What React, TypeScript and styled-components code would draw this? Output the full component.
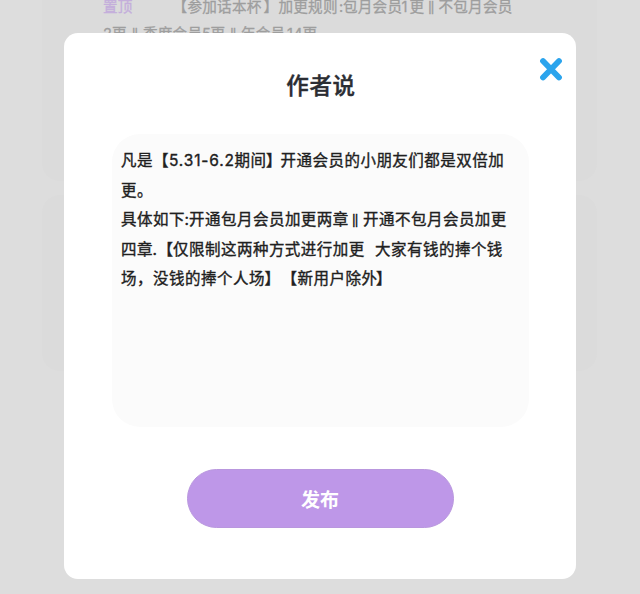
import React from "react";
import styled, { createGlobalStyle } from "styled-components";

const GlobalStyle = createGlobalStyle`
  * { box-sizing: border-box; }
  body { margin: 0; background: #dddddd; }
`;

const Page = styled.div`
  position: relative;
  width: 640px;
  height: 594px;
  overflow: hidden;
  background: #dddddd;
  font-family: "Noto Sans CJK SC", sans-serif;
`;

const Feed = styled.div`
  display: flex;
  flex-direction: column;
  gap: 14px;
  width: 555px;
  margin-left: 42px;
`;

const FeedCard = styled.section<{ $height: number; $first?: boolean }>`
  height: ${(p) => p.$height}px;
  padding: 0 0 0 61px;
  background: #dbdbdb;
  border-radius: ${(p) => (p.$first ? "0 0 18px 18px" : "18px")};
`;

const FeedLine = styled.div<{ $shift?: number }>`
  display: flex;
  align-items: baseline;
  height: 26.5px;
  margin-top: ${(p) => p.$shift ?? 0}px;
  line-height: 27px;
  font-size: 14.6px;
  letter-spacing: 0.2px;
  color: #9e9e9e;
  white-space: pre;
  -webkit-text-stroke: 0.3px currentColor;
`;

const Overlay = styled.div`
  position: absolute;
  inset: 0;
  display: flex;
  padding: 32.5px 64px 15.5px;
`;

const Dialog = styled.div`
  position: relative;
  display: flex;
  flex-direction: column;
  align-items: center;
  width: 512px;
  height: 546px;
  background: #fff;
  border-radius: 14px;
`;

const Title = styled.h1`
  margin: 33px 0 0 2px;
  height: 36px;
  line-height: 36px;
  font-size: 22.5px;
  font-weight: 500;
  letter-spacing: 0.6px;
  color: #2b2d33;
  -webkit-text-stroke: 0.4px currentColor;
`;

const CloseButton = styled.button`
  position: absolute;
  top: 22px;
  right: 11.5px;
  width: 28px;
  height: 28px;
  padding: 0;
  border: 0;
  background: none;
  svg { display: block; }
`;

const Note = styled.div`
  width: 417px;
  height: 293px;
  margin-top: 32.5px;
  padding: 11px 0 0 9.5px;
  background: #fbfbfb;
  border-radius: 28px;
`;

const NoteLine = styled.div`
  display: flex;
  align-items: baseline;
  height: 29.6px;
  line-height: 29.6px;
  font-size: 15.5px;
  letter-spacing: 0.48px;
  color: #202020;
  white-space: pre;
  -webkit-text-stroke: 0.35px currentColor;
`;

const Run = styled.span<{ $w?: number }>`
  flex: none;
  width: ${(p) => (p.$w ? `${p.$w}px` : "auto")};
`;

const PinTag = styled(Run)`
  color: #c4aedb;
`;

const Latin = styled(Run)`
  font-family: Inter, sans-serif;
`;

const DateRange = styled(Latin)`
  letter-spacing: 0.85px;
`;

const Bars = styled(Run)`
  font-family: "Noto Sans", sans-serif;
  font-size: 0.8em;
  letter-spacing: 0;
  text-align: center;
  transform: translateY(-1px);
  -webkit-text-stroke: 0.5px currentColor;
`;

const PublishButton = styled.button`
  width: 267px;
  height: 59.5px;
  margin-top: 41.5px;
  padding: 2px 0 0;
  border: 1px solid #b997de;
  border-radius: 30px;
  background: #be97e8;
  color: #fff;
  font-family: inherit;
  font-size: 19px;
  font-weight: 700;
  line-height: 28px;
`;

export default function App() {
  return (
    <Page>
      <GlobalStyle />
      <Feed>
        <FeedCard $height={181} $first>
          <FeedLine $shift={-8}>
            <PinTag $w={69.5}>置顶</PinTag>
            <Run $w={15}>【</Run>
            <Run $w={76}>参加话本杯</Run>
            <Run $w={15}>】</Run>
            <Run $w={60.5}>加更规则</Run>
            <Latin $w={4}>:</Latin>
            <Run $w={58.5}>包月会员</Run>
            <Latin $w={8}>1</Latin>
            <Run $w={14.5}>更</Run>
            <Bars $w={14.5}>‖</Bars>
            <Run>不包月会员</Run>
          </FeedLine>
          <FeedLine>
            <Latin $w={9}>2</Latin>
            <Run $w={15}>更</Run>
            <Bars $w={16}>‖</Bars>
            <Run $w={59}>季度会员</Run>
            <Latin $w={8.5}>5</Latin>
            <Run $w={15}>更</Run>
            <Bars $w={15.5}>‖</Bars>
            <Run $w={46}>年会员</Run>
            <Latin $w={15.5}>14</Latin>
            <Run>更</Run>
          </FeedLine>
        </FeedCard>
        <FeedCard $height={176} />
      </Feed>
      <Overlay>
        <Dialog role="dialog" aria-label="作者说">
          <CloseButton aria-label="关闭">
            <svg width="28" height="28" viewBox="0 0 28 28">
              <path
                d="M6 6 22 22.5M22 6 6 22.5"
                stroke="#2ba4ed"
                strokeWidth="5.8"
                strokeLinecap="round"
                fill="none"
              />
            </svg>
          </CloseButton>
          <Title>作者说</Title>
          <Note>
            <NoteLine>
              <Run $w={32}>凡是</Run>
              <Run $w={16}>【</Run>
              <DateRange $w={65.5}>5.31-6.2</DateRange>
              <Run $w={31.5}>期间</Run>
              <Run $w={14.5}>】</Run>
              <Run>开通会员的小朋友们都是双倍加</Run>
            </NoteLine>
            <NoteLine>
              <Run>更。</Run>
            </NoteLine>
            <NoteLine>
              <Run $w={63.5}>具体如下</Run>
              <Latin $w={4.5}>:</Latin>
              <Run $w={158.5}>开通包月会员加更两章</Run>
              <Bars $w={15.5}>‖</Bars>
              <Run>开通不包月会员加更</Run>
            </NoteLine>
            <NoteLine>
              <Run $w={31.5}>四章</Run>
              <Latin $w={5}>.</Latin>
              <Run $w={15.5}>【</Run>
              <Run $w={192}>仅限制这两种方式进行加更</Run>
              <Run $w={10}>{"  "}</Run>
              <Run>大家有钱的捧个钱</Run>
            </NoteLine>
            <NoteLine>
              <Run $w={32}>场，</Run>
              <Run $w={111.5}>没钱的捧个人场</Run>
              <Run $w={17}>】</Run>
              <Run $w={16}>【</Run>
              <Run $w={78.5}>新用户除外</Run>
              <Run>】</Run>
            </NoteLine>
          </Note>
          <PublishButton>发布</PublishButton>
        </Dialog>
      </Overlay>
    </Page>
  );
}
